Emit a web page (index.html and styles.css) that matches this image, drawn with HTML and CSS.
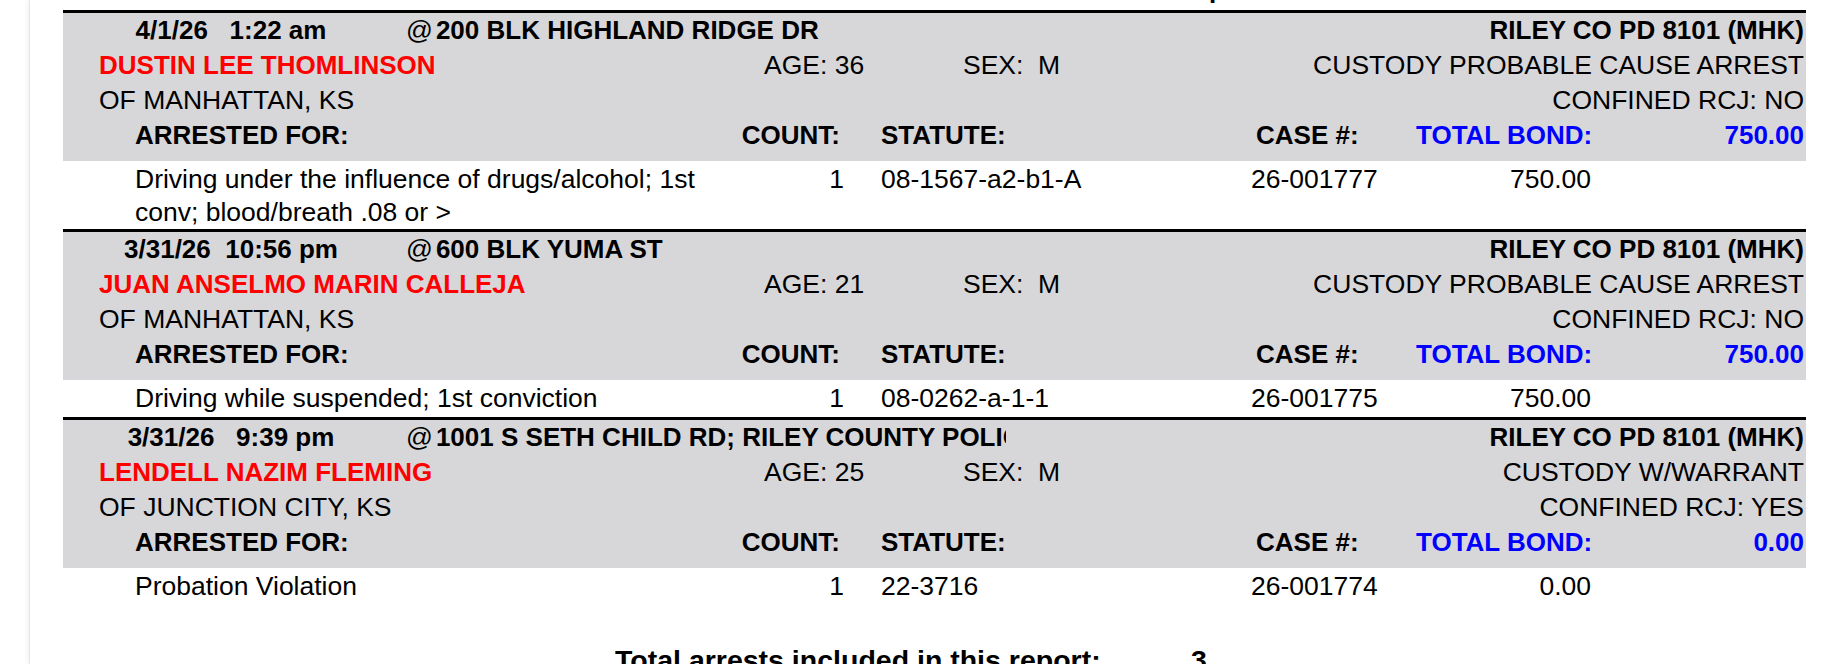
FILE: index.html
```html
<!DOCTYPE html>
<html>
<head>
<meta charset="utf-8">
<title>Arrest Report</title>
<link rel="stylesheet" href="styles.css">
</head>
<body>
<div class="page">
  <div class="report">
    <div class="title">Arrest Report</div>

    <div class="record">
      <div class="head">
        <div class="r1"><span class="when">4/1/26   1:22 am</span><span class="where"><span class="at">@</span>200 BLK HIGHLAND RIDGE DR</span><span class="agency">RILEY CO PD 8101 (MHK)</span></div>
        <div class="r2"><span class="name">DUSTIN LEE THOMLINSON</span><span class="age">AGE: 36</span><span class="sex">SEX:  M</span><span class="custody">CUSTODY PROBABLE CAUSE ARREST</span></div>
        <div class="r3"><span class="city">OF MANHATTAN, KS</span><span class="confined">CONFINED RCJ: NO</span></div>
        <div class="cols labels"><span class="c-desc">ARRESTED FOR:</span><span class="c-count">COUNT:</span><span class="c-stat">STATUTE:</span><span class="c-case">CASE #:</span><span class="c-bond blue">TOTAL BOND:</span><span class="c-total blue">750.00</span></div>
      </div>
      <div class="cols charge"><span class="c-desc">Driving under the influence of drugs/alcohol; 1st conv; blood/breath .08 or &gt;</span><span class="c-count">1</span><span class="c-stat">08-1567-a2-b1-A</span><span class="c-case">26-001777</span><span class="c-bond">750.00</span></div>
    </div>

    <div class="record">
      <div class="head">
        <div class="r1"><span class="when">3/31/26  10:56 pm</span><span class="where"><span class="at">@</span>600 BLK YUMA ST</span><span class="agency">RILEY CO PD 8101 (MHK)</span></div>
        <div class="r2"><span class="name">JUAN ANSELMO MARIN CALLEJA</span><span class="age">AGE: 21</span><span class="sex">SEX:  M</span><span class="custody">CUSTODY PROBABLE CAUSE ARREST</span></div>
        <div class="r3"><span class="city">OF MANHATTAN, KS</span><span class="confined">CONFINED RCJ: NO</span></div>
        <div class="cols labels"><span class="c-desc">ARRESTED FOR:</span><span class="c-count">COUNT:</span><span class="c-stat">STATUTE:</span><span class="c-case">CASE #:</span><span class="c-bond blue">TOTAL BOND:</span><span class="c-total blue">750.00</span></div>
      </div>
      <div class="cols charge"><span class="c-desc">Driving while suspended; 1st conviction</span><span class="c-count">1</span><span class="c-stat">08-0262-a-1-1</span><span class="c-case">26-001775</span><span class="c-bond">750.00</span></div>
    </div>

    <div class="record">
      <div class="head">
        <div class="r1"><span class="when">3/31/26   9:39 pm</span><span class="where"><span class="at">@</span>1001 S SETH CHILD RD; RILEY COUNTY POLICE DEPARTMENT</span><span class="agency">RILEY CO PD 8101 (MHK)</span></div>
        <div class="r2"><span class="name">LENDELL NAZIM FLEMING</span><span class="age">AGE: 25</span><span class="sex">SEX:  M</span><span class="custody">CUSTODY W/WARRANT</span></div>
        <div class="r3"><span class="city">OF JUNCTION CITY, KS</span><span class="confined">CONFINED RCJ: YES</span></div>
        <div class="cols labels"><span class="c-desc">ARRESTED FOR:</span><span class="c-count">COUNT:</span><span class="c-stat">STATUTE:</span><span class="c-case">CASE #:</span><span class="c-bond blue">TOTAL BOND:</span><span class="c-total blue">0.00</span></div>
      </div>
      <div class="cols charge"><span class="c-desc">Probation Violation</span><span class="c-count">1</span><span class="c-stat">22-3716</span><span class="c-case">26-001774</span><span class="c-bond">0.00</span></div>
    </div>

    <div class="total"><span>Total arrests included in this report:</span><span>3</span></div>
  </div>
</div>
</body>
</html>
```

FILE: styles.css
```css
html, body {
  margin: 0;
  padding: 0;
}

body {
  background: #ffffff;
  color: #000000;
  font-family: "Liberation Sans", Arial, sans-serif;
  font-size: 26.5px;
  overflow: hidden;
}

.page {
  display: flow-root;
  margin-left: 29px;
  border-left: 1px solid #e6e6e6;
  box-shadow: -2px 0 4px rgba(0, 0, 0, 0.05);
  padding-left: 33px;
  height: 664px;
  background: #ffffff;
}

.report {
  width: 1743px;
}

.title {
  font-size: 26px;
  font-weight: bold;
  line-height: 30px;
  height: 30px;
  margin-top: -26px;
  padding-left: 1029px;
  white-space: nowrap;
}

.record {
  border-top: 3px solid #000000;
}

.title + .record {
  margin-top: 6px;
}

.head {
  background: #d7d7da;
  padding: 0 2px 8px 0;
}

.head span,
.charge span,
.total span {
  white-space: nowrap;
}

.r1 {
  display: grid;
  grid-template-columns: 336px 607px 1fr;
  line-height: 35px;
  font-size: 26px;
  font-weight: bold;
}

.r1 .when {
  text-align: center;
  white-space: pre;
}

.where {
  padding-left: 7px;
  overflow: hidden;
}

.at {
  font-size: 26.5px;
  font-weight: normal;
  margin-right: 3px;
}

.agency {
  text-align: right;
}

.r2 {
  display: grid;
  grid-template-columns: 701px 199px 1fr auto;
  line-height: 35px;
}

.name {
  padding-left: 36px;
  color: #ff0000;
  font-size: 26px;
  font-weight: bold;
}

.r2 .sex {
  white-space: pre;
}

.r3 {
  display: flex;
  justify-content: space-between;
  padding-left: 36px;
  line-height: 35px;
}

.cols {
  display: grid;
  padding-left: 72px;
  grid-template-columns: 600px 109px 407px 165px 175px 1fr;
}

.charge .c-desc {
  white-space: normal;
}

.c-count {
  text-align: right;
}

.c-stat {
  padding-left: 37px;
}

.labels {
  font-size: 26px;
  font-weight: bold;
  line-height: 35px;
}

.labels .c-count {
  padding-right: 4px;
}

.labels .c-case {
  padding-left: 5px;
}

.c-total {
  text-align: right;
}

.blue {
  color: #0000ff;
}

.charge {
  box-sizing: border-box;
  min-height: 37px;
  line-height: 33px;
  padding-top: 2px;
}

.charge .c-bond {
  text-align: right;
}

.total {
  display: grid;
  grid-template-columns: 576px auto;
  padding-left: 552px;
  margin-top: 38px;
  line-height: 35px;
  font-size: 28.5px;
  font-weight: bold;
}
```
